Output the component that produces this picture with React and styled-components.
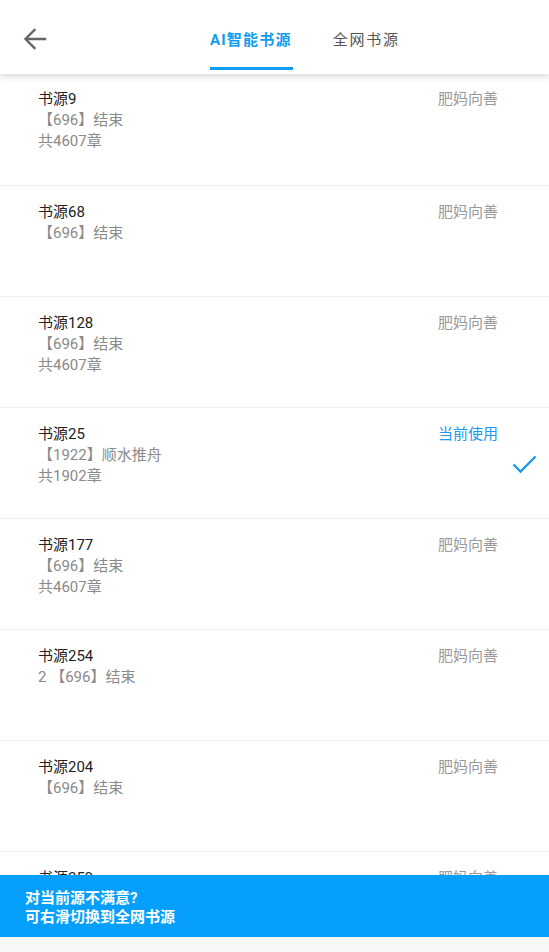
import React from "react";
import styled, { createGlobalStyle } from "styled-components";

const Global = createGlobalStyle`
  html, body { margin: 0; padding: 0; background: #ffffff; }
  body { font-family: Roboto, "Noto Sans CJK SC", sans-serif; }
  * { box-sizing: border-box; }
`;

const Page = styled.div`
  width: 549px;
  height: 952px;
  position: relative;
  overflow: hidden;
  background: #ffffff;
  display: flex;
  flex-direction: column;
`;

const Header = styled.header`
  height: 74px;
  flex: none;
  background: #fff;
  display: flex;
  align-items: stretch;
  position: relative;
  z-index: 2;
  box-shadow: 0 2px 8px rgba(0, 0, 0, 0.18);
`;

const BackButton = styled.button`
  position: absolute;
  left: 22px;
  top: 27px;
  width: 26px;
  height: 24px;
  padding: 0;
  border: none;
  background: none;
  display: flex;
  align-items: center;
  justify-content: center;
`;

const Tabs = styled.nav`
  flex: 1;
  display: flex;
  justify-content: flex-start;
  gap: 41px;
  padding-left: 210px;
`;

const Tab = styled.div`
  position: relative;
  display: flex;
  align-items: flex-start;
  padding-top: 28px;
  font-size: 15px;
  letter-spacing: ${(p) => (p.$active ? "1.2px" : "1.8px")};
  color: ${(p) => (p.$active ? "#109cf1" : "#555")};
  font-weight: ${(p) => (p.$active ? 700 : 400)};
  &::after {
    content: "";
    display: ${(p) => (p.$active ? "block" : "none")};
    position: absolute;
    left: 0;
    right: -1px;
    top: 67px;
    height: 3px;
    background: #109cf1;
  }
`;

const List = styled.div`
  flex: 1;
  display: flex;
  flex-direction: column;
`;

const Row = styled.div`
  height: 111px;
  flex: none;
  display: flex;
  justify-content: space-between;
  padding: 16px 51px 0 38px;
  border-bottom: 1px solid #f0f0f0;
  position: relative;
  &:first-child {
    height: 112px;
    padding-top: 15px;
  }
`;

const Info = styled.div`
  display: flex;
  flex-direction: column;
`;

const Title = styled.div`
  font-size: 15px;
  line-height: 21px;
  color: #222;
`;

const Sub = styled.div`
  font-size: 15px;
  line-height: 21px;
  color: #8a8a8a;
`;

const Tag = styled.div`
  font-size: 15px;
  line-height: 21px;
  color: ${(p) => (p.$current ? "#1a9af0" : "#9a9a9a")};
`;

const Check = styled.svg`
  position: absolute;
  right: 12px;
  top: 46px;
`;

const Banner = styled.div`
  position: absolute;
  left: 0;
  right: 0;
  bottom: 15px;
  height: 62px;
  background: #069ffb;
  color: #fff;
  font-size: 15px;
  font-weight: 700;
  padding: 14px 24px 0 25px;
  z-index: 3;
  display: flex;
  flex-direction: column;
`;

const BannerLine = styled.div`
  line-height: 19px;
`;

const NavStrip = styled.div`
  position: absolute;
  left: 0;
  right: 0;
  bottom: 0;
  height: 15px;
  background: #f7f7f7;
  z-index: 3;
`;

const rows = [
  { name: "书源9", lines: ["【696】结束", "共4607章"] },
  { name: "书源68", lines: ["【696】结束"] },
  { name: "书源128", lines: ["【696】结束", "共4607章"] },
  { name: "书源25", lines: ["【1922】顺水推舟", "共1902章"], current: true },
  { name: "书源177", lines: ["【696】结束", "共4607章"] },
  { name: "书源254", lines: ["2 【696】结束"] },
  { name: "书源204", lines: ["【696】结束"] },
  { name: "书源259", lines: ["【696】结束"] },
];

export default function App() {
  return (
    <Page>
      <Global />
      <Header>
        <BackButton aria-label="back">
          <svg width="24" height="22" viewBox="0 0 24 22" fill="none">
            <path d="M22 11H3M11.5 2L2.5 11l9 9" stroke="#666" strokeWidth="2.4" strokeLinecap="square" />
          </svg>
        </BackButton>
        <Tabs>
          <Tab $active>AI智能书源</Tab>
          <Tab>全网书源</Tab>
        </Tabs>
      </Header>
      <List>
        {rows.map((r) => (
          <Row key={r.name}>
            <Info>
              <Title>{r.name}</Title>
              {r.lines.map((l) => (
                <Sub key={l}>{l}</Sub>
              ))}
            </Info>
            <Tag $current={r.current}>{r.current ? "当前使用" : "肥妈向善"}</Tag>
            {r.current && (
              <Check width="25" height="20" viewBox="0 0 25 20" fill="none">
                <path d="M1.5 10.5l7 7L23.5 2.5" stroke="#1a9af0" strokeWidth="2.4" />
              </Check>
            )}
          </Row>
        ))}
      </List>
      <Banner>
        <BannerLine>对当前源不满意?</BannerLine>
        <BannerLine>可右滑切换到全网书源</BannerLine>
      </Banner>
      <NavStrip />
    </Page>
  );
}
